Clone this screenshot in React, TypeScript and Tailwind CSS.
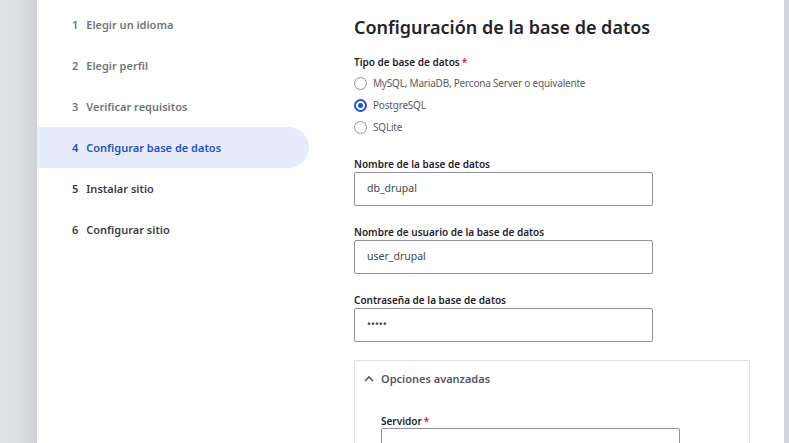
const steps = [
  { n: 1, label: "Elegir un idioma", state: "done" },
  { n: 2, label: "Elegir perfil", state: "done" },
  { n: 3, label: "Verificar requisitos", state: "done" },
  { n: 4, label: "Configurar base de datos", state: "active" },
  { n: 5, label: "Instalar sitio", state: "todo" },
  { n: 6, label: "Configurar sitio", state: "todo" },
];

const dbTypes = [
  { id: "mysql", label: "MySQL, MariaDB, Percona Server o equivalente" },
  { id: "pgsql", label: "PostgreSQL" },
  { id: "sqlite", label: "SQLite" },
];

function Radio({ checked }: { checked: boolean }) {
  return checked ? (
    <span className="flex h-[13px] w-[13px] items-center justify-center rounded-full border-2 border-[#2450c9]">
      <span className="h-[5px] w-[5px] rounded-full bg-[#2450c9]" />
    </span>
  ) : (
    <span className="h-[13px] w-[13px] rounded-full border border-[#8f9099]" />
  );
}

function Field({ label, value, required }: { label: string; value: string; required?: boolean }) {
  return (
    <div className="flex flex-col">
      <div className="text-[10px] font-semibold leading-[14px] text-[#232429]">
        {label}
        {required && <span className="ml-[2px] text-[#d72222]">*</span>}
      </div>
      <div className="mt-[1px] flex h-[34px] w-[299px] items-center rounded-[2px] border border-[#919297] px-[12px] text-[10.5px] text-[#45464b]">
        {value}
      </div>
    </div>
  );
}

export default function App() {
  return (
    <div className="flex h-[443px] w-[789px] flex-col overflow-hidden bg-white font-['Noto_Sans',sans-serif]">
      <div className="h-[3px] bg-[#24282c]" />
      <div className="flex flex-1">
        <div className="w-[37px] bg-gradient-to-r from-[#e1e2e6] via-[#dedfe3] to-[#d1d2d7]" />
        <div className="flex flex-1">
          <nav className="w-[272px] pt-[4px]">
            {steps.map((s) => (
              <div
                key={s.n}
                className={`flex h-[41px] items-center gap-[8px] pl-[35px] pt-[2px] text-[11px] font-semibold ${
                  s.state === "active"
                    ? "rounded-r-full bg-[#e6ecfc] text-[#2450c9]"
                    : s.state === "done"
                    ? "text-[#737479]"
                    : "text-[#3b3c40]"
                }`}
              >
                <span>{s.n}</span>
                <span>{s.label}</span>
              </div>
            ))}
          </nav>
          <main className="flex flex-1 flex-col pl-[45px] pt-[13px]">
            <h1 className="text-[18px] font-semibold leading-[28px] text-[#232429]">
              Configuración de la base de datos
            </h1>
            <div className="mt-[14px] text-[10px] font-semibold leading-[15px] text-[#232429]">
              Tipo de base de datos<span className="ml-[2px] text-[#d72222]">*</span>
            </div>
            <div className="mt-[7px] flex flex-col gap-[9px]">
              {dbTypes.map((t) => (
                <label key={t.id} className="flex h-[13px] items-center gap-[6px] text-[10px] tracking-[-0.2px] text-[#5a5b60]">
                  <Radio checked={t.id === "pgsql"} />
                  {t.label}
                </label>
              ))}
            </div>
            <div className="mt-[23px] flex flex-col gap-[19px]">
              <Field label="Nombre de la base de datos" value="db_drupal" />
              <Field label="Nombre de usuario de la base de datos" value="user_drupal" />
              <Field label="Contraseña de la base de datos" value="•••••" />
            </div>
            <div className="mt-[18px] w-[396px] flex-1 rounded-t-[2px] border border-b-0 border-[#dfe0e4] px-[8px] pt-[10px]">
              <div className="flex items-center gap-[6px] text-[11px] font-semibold text-[#55565b]">
                <svg width="12" height="12" viewBox="0 0 12 12" fill="none">
                  <path d="M2 8 L6 4 L10 8" stroke="#55565b" strokeWidth="1.6" />
                </svg>
                Opciones avanzadas
              </div>
              <div className="mt-[26px] pl-[18px]">
                <div className="text-[10px] font-semibold leading-[14px] text-[#232429]">
                  Servidor<span className="ml-[2px] text-[#d72222]">*</span>
                </div>
                <div className="h-[34px] w-[299px] rounded-[2px] border border-[#919297]" />
              </div>
            </div>
          </main>
        </div>
        <div className="w-[5px] bg-[#d5d5dc]" />
      </div>
    </div>
  );
}
